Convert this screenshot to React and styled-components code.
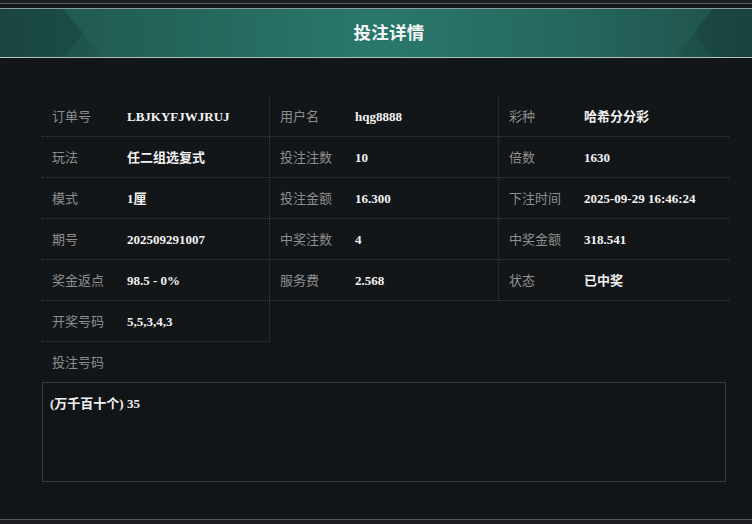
import React from 'react';
import styled, {createGlobalStyle} from 'styled-components';

const GlobalStyle = createGlobalStyle`
    html, body {
        margin: 0;
        padding: 0;
        background: #131619;
    }
    body {
        font-family: "Noto Sans CJK SC", "Noto Sans", sans-serif;
    }
`

const rows = [
    [['订单号', 'LBJKYFJWJRUJ'], ['用户名', 'hqg8888'], ['彩种', '哈希分分彩']],
    [['玩法', '任二组选复式'], ['投注注数', '10'], ['倍数', '1630']],
    [['模式', '1厘'], ['投注金额', '16.300'], ['下注时间', '2025-09-29 16:46:24']],
    [['期号', '202509291007'], ['中奖注数', '4'], ['中奖金额', '318.541']],
    [['奖金返点', '98.5 - 0%'], ['服务费', '2.568'], ['状态', '已中奖']],
    [['开奖号码', '5,5,3,4,3']],
]

const HeaderDeco = () => (
    <DecoSvg viewBox="0 0 752 48" preserveAspectRatio="none">
        <polygon points="0,0 63,0 83,24 65,48 0,48" fill="rgba(0,0,0,0.16)"/>
        <polygon points="83,24 100,48 65,48" fill="rgba(0,0,0,0.07)"/>
        <polygon points="752,0 712,0 694,24 712,48 752,48" fill="rgba(0,0,0,0.16)"/>
        <polygon points="694,24 676,48 712,48" fill="rgba(0,0,0,0.07)"/>
    </DecoSvg>
)

export default function App() {
    return (
        <Page>
            <GlobalStyle/>
            <TopStrip/>
            <Header>
                <HeaderDeco/>
                <Title>投注详情</Title>
            </Header>
            <Body>
                <Grid>
                    {rows.map((row, r) => row.map(([label, value], c) => (
                        <Cell key={r + '-' + c} $last={c === 2}>
                            <Label>{label}</Label>
                            <Value>{value}</Value>
                        </Cell>
                    )))}
                </Grid>
                <BetLabel>投注号码</BetLabel>
                <BetBox>(万千百十个) 35</BetBox>
            </Body>
            <BottomStrip/>
        </Page>
    )
}

const Page = styled.div`
    width: 752px;
    height: 524px;
    display: flex;
    flex-direction: column;
    background: #131619;
    overflow: hidden;
`
const TopStrip = styled.div`
    height: 3px;
    background: #1c1e21;
    border-bottom: 1px solid #55595c;
    margin-bottom: 4px;
`
const Header = styled.div`
    position: relative;
    height: 48px;
    border-top: 1px solid #8c9a98;
    border-bottom: 1px solid #b4bebc;
    background: linear-gradient(90deg, #1f544c 0%, #24665b 25%, #2a786c 50%, #25685e 75%, #1f504a 100%);
    display: flex;
    align-items: center;
    justify-content: center;
`
const DecoSvg = styled.svg`
    position: absolute;
    inset: 0;
    width: 100%;
    height: 100%;
`
const Title = styled.h2`
    position: relative;
    margin: 0 0 3px 26px;
    font-size: 17.5px;
    font-weight: bold;
    color: #f4f6f5;
    letter-spacing: 0.3px;
`
const Body = styled.div`
    flex: 1;
    padding: 38px 23px 0 42px;
    display: flex;
    flex-direction: column;
`
const Grid = styled.div`
    display: grid;
    grid-template-columns: 228px 229px 1fr;
`
const Cell = styled.div`
    height: 41px;
    line-height: 37px;
    box-sizing: border-box;
    white-space: nowrap;
    padding-left: 10px;
    border-bottom: 1px dotted #3a3d40;
    border-right: ${props => (props.$last ? 'none' : '1px dotted #3a3d40')};
`
const Label = styled.span`
    display: inline-block;
    width: 75px;
    font-size: 13px;
    color: #8e8e8e;
`
const Value = styled.span`
    font-family: "Liberation Serif", "Noto Sans CJK SC", serif;
    font-weight: bold;
    font-size: 13px;
    color: #f2f2f2;
`
const BetLabel = styled.div`
    height: 40px;
    line-height: 40px;
    padding-left: 10px;
    font-size: 13px;
    color: #8e8e8e;
`
const BetBox = styled.div`
    height: 100px;
    margin-right: 3px;
    box-sizing: border-box;
    border: 1px solid #38393b;
    background: #121518;
    padding: 10px 7px;
    font-family: "Liberation Serif", "Noto Sans CJK SC", serif;
    font-weight: bold;
    font-size: 13px;
    color: #f2f2f2;
`
const BottomStrip = styled.div`
    height: 4px;
    border-top: 1px solid #55595c;
    background: #1c1e21;
`
